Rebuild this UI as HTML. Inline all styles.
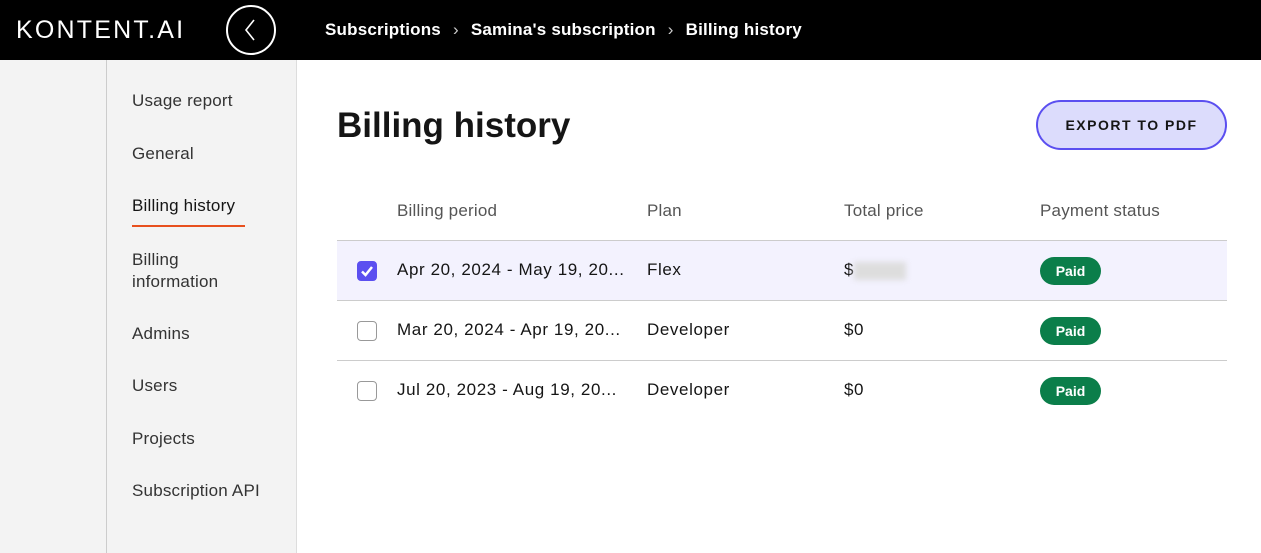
<!DOCTYPE html><html><head><style>
*{margin:0;padding:0;box-sizing:border-box}
body{width:1261px;height:553px;overflow:hidden;font-family:"Liberation Sans",sans-serif;background:#fff;position:relative;color:#151515}
.top{position:absolute;left:0;top:0;width:1261px;height:60px;background:#000;color:#fff}
.logo{position:absolute;left:16px;top:16px;font-size:25px;letter-spacing:2.2px;font-weight:400}
.back{position:absolute;left:226px;top:5px;width:50px;height:50px;border:2px solid #fff;border-radius:50%}
.crumb{position:absolute;left:325px;top:20px;font-size:17px;font-weight:bold;letter-spacing:0.2px}
.crumb span.s{margin:0 12px;font-weight:normal;color:#ccc}
.side1{position:absolute;left:0;top:60px;width:107px;height:493px;background:#f3f3f3;border-right:1px solid #ccc}
.side2{position:absolute;left:107px;top:60px;width:190px;height:493px;background:#f3f3f3;border-right:1px solid #ddd}
.nav{position:absolute;left:132px;font-size:17px;color:#333;letter-spacing:0.2px}
h1{position:absolute;left:337px;top:106px;font-size:35px;font-weight:bold}
.btn{position:absolute;left:1036px;top:100px;width:191px;height:50px;border:2px solid #5b4ff0;background:#dcdcfc;border-radius:25px;font-size:14px;font-weight:bold;letter-spacing:1.5px;text-align:center;line-height:46px}
.th{position:absolute;top:201px;font-size:17px;color:#555;letter-spacing:0.2px}
.row{position:absolute;left:337px;width:890px;height:60px;border-top:1px solid #ccc}
.row div{position:absolute;top:19px;font-size:17px;letter-spacing:0.6px}
.cb{position:absolute;left:20px;top:20px;width:20px;height:20px;border:1px solid #999;border-radius:4px;background:#fff}
.paid{position:absolute;left:703px;top:16px!important;width:61px;height:28px;background:#0b7e4a;color:#fff;border-radius:14px;font-size:14px!important;font-weight:bold;text-align:center;line-height:28px;letter-spacing:0!important}
</style></head><body>
<div class="top"><div class="logo">KONTENT.AI</div>
<div class="back"><svg width="46" height="46"><path d="M26 13 L18 23 L26 33" stroke="#fff" stroke-width="1.6" fill="none"/></svg></div>
<div class="crumb">Subscriptions<span class="s">›</span>Samina's subscription<span class="s">›</span>Billing history</div></div>
<div class="side1"></div><div class="side2"></div>
<div class="nav" style="top:91px">Usage report</div>
<div class="nav" style="top:144px">General</div>
<div class="nav" style="top:196px;color:#151515">Billing history</div>
<div style="position:absolute;left:132px;top:225px;width:113px;height:2px;background:#e8501e"></div>
<div class="nav" style="top:249px;line-height:22px">Billing<br>information</div>
<div class="nav" style="top:324px">Admins</div>
<div class="nav" style="top:376px">Users</div>
<div class="nav" style="top:429px">Projects</div>
<div class="nav" style="top:481px">Subscription API</div>
<h1>Billing history</h1>
<div class="btn">EXPORT TO PDF</div>
<div class="th" style="left:397px">Billing period</div>
<div class="th" style="left:647px">Plan</div>
<div class="th" style="left:844px">Total price</div>
<div class="th" style="left:1040px">Payment status</div>
<div class="row" style="top:240px;background:#f3f2fe"><span class="cb" style="background:#5b4ff0;border-color:#5b4ff0"><svg width="18" height="18"><path d="M4 9.5 L7.5 13 L14 5" stroke="#fff" stroke-width="2.5" fill="none"/></svg></span><div style="left:60px">Apr 20, 2024 - May 19, 20...</div><div style="left:310px">Flex</div><div style="left:507px">$<span style="display:inline-block;width:52px;height:18px;background:#ddd;filter:blur(3px);vertical-align:middle"></span></div><div class="paid">Paid</div></div>
<div class="row" style="top:300px"><span class="cb"></span><div style="left:60px">Mar 20, 2024 - Apr 19, 20...</div><div style="left:310px">Developer</div><div style="left:507px">$0</div><div class="paid">Paid</div></div>
<div class="row" style="top:360px"><span class="cb"></span><div style="left:60px">Jul 20, 2023 - Aug 19, 20...</div><div style="left:310px">Developer</div><div style="left:507px">$0</div><div class="paid">Paid</div></div>
</body></html>
